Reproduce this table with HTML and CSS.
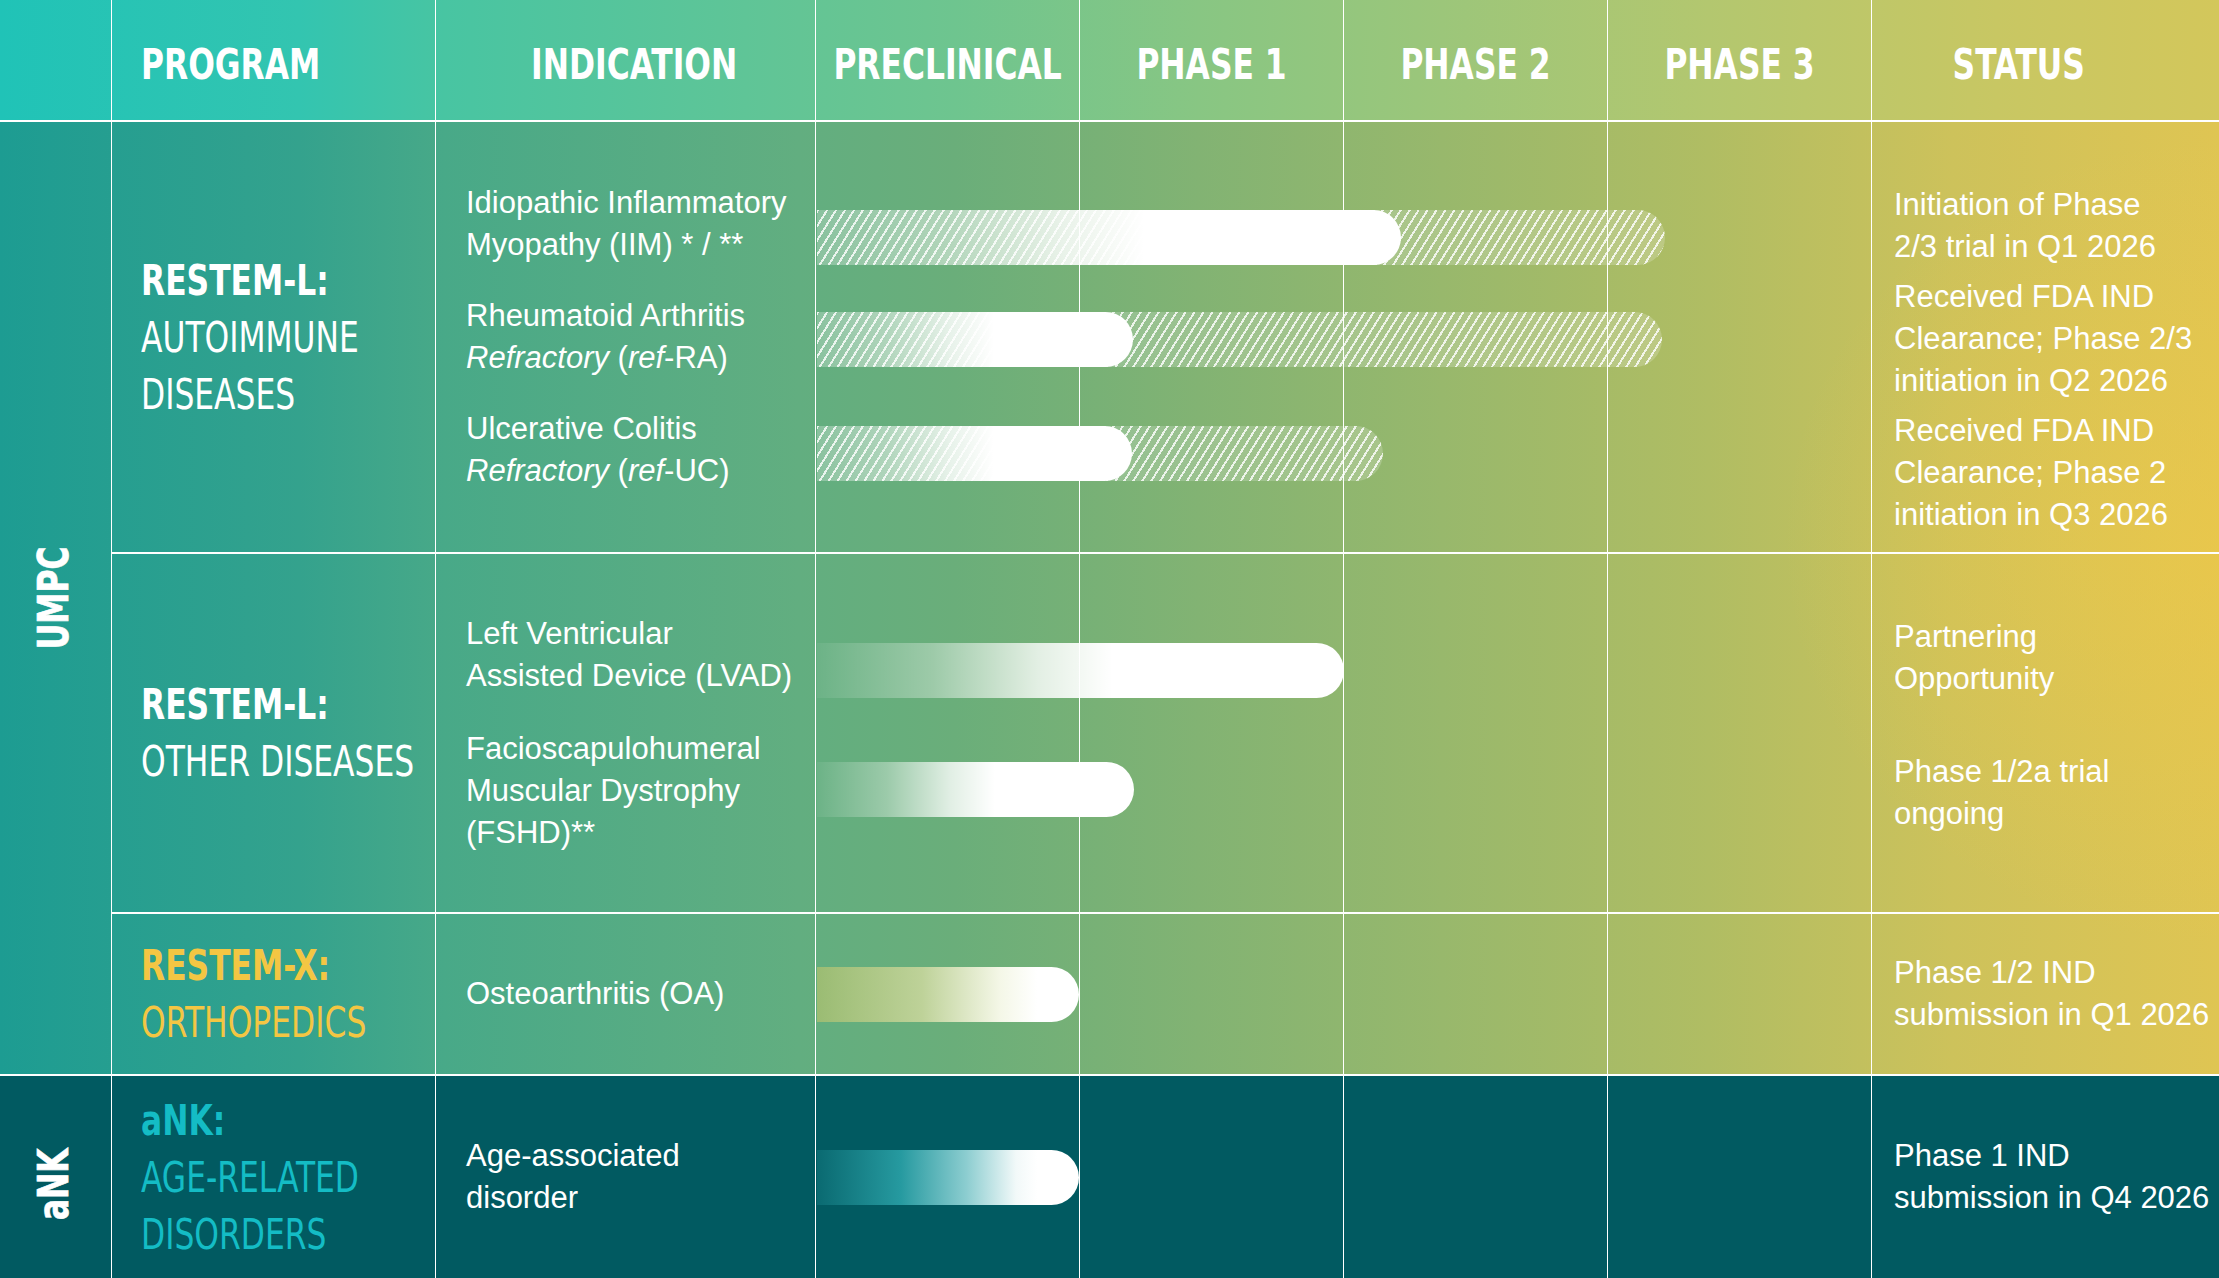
FILE: index.html
```html
<!DOCTYPE html>
<html lang="en">
<head>
<meta charset="utf-8">
<title>Pipeline</title>
<link rel="stylesheet" href="styles.css">
</head>
<body>
<div class="chart">
  <div class="head">
    <div class="hcell"></div>
    <div class="hcell h-prog"><span class="cond left">PROGRAM</span></div>
    <div class="hcell h-ind"><span class="cond">INDICATION</span></div>
    <div class="hcell h-ph"><span class="cond">PRECLINICAL</span></div>
    <div class="hcell h-ph"><span class="cond">PHASE 1</span></div>
    <div class="hcell h-ph"><span class="cond">PHASE 2</span></div>
    <div class="hcell h-ph"><span class="cond">PHASE 3</span></div>
    <div class="hcell h-status"><span class="cond">STATUS</span></div>
  </div>

  <div class="umpc">
    <div class="side"><span class="vlabel">UMPC</span></div>
    <div class="rows">
      <div class="row r1">
        <div class="prog">
          <span class="pb">RESTEM-L:</span>
          <span class="pr">AUTOIMMUNE</span>
          <span class="pr">DISEASES</span>
        </div>
        <div class="ind">
          <p>Idiopathic Inflammatory<br>Myopathy (IIM) * / **</p>
          <p>Rheumatoid Arthritis<br><em>Refractory</em> (<em>ref</em>-RA)</p>
          <p>Ulcerative Colitis<br><em>Refractory</em> (<em>ref</em>-UC)</p>
        </div>
        <div class="phases top-a">
          <div class="bar hatch" style="width:848px"><div class="bar fade" style="width:584px"></div></div>
          <div class="bar hatch gap-a" style="width:845px"><div class="bar fade" style="width:316px"></div></div>
          <div class="bar hatch gap-b" style="width:566px"><div class="bar fade" style="width:315px"></div></div>
        </div>
        <div class="status top">
          <p>Initiation of Phase<br>2/3 trial in Q1 2026</p>
          <p class="sgap">Received FDA IND<br>Clearance; Phase 2/3<br>initiation in Q2 2026</p>
          <p class="sgap">Received FDA IND<br>Clearance; Phase 2<br>initiation in Q3 2026</p>
        </div>
      </div>

      <div class="row r2">
        <div class="prog">
          <span class="pb">RESTEM-L:</span>
          <span class="pr">OTHER DISEASES</span>
        </div>
        <div class="ind gap-wide">
          <p>Left Ventricular<br>Assisted Device (LVAD)</p>
          <p>Facioscapulohumeral<br>Muscular Dystrophy<br>(FSHD)**</p>
        </div>
        <div class="phases top-b">
          <div class="bar fade" style="width:527px"></div>
          <div class="bar fade gap-c" style="width:317px"></div>
        </div>
        <div class="status top">
          <p>Partnering<br>Opportunity</p>
          <p class="sgap-wide">Phase 1/2a trial<br>ongoing</p>
        </div>
      </div>

      <div class="row r3">
        <div class="prog yellow">
          <span class="pb">RESTEM-X:</span>
          <span class="pr">ORTHOPEDICS</span>
        </div>
        <div class="ind">
          <p>Osteoarthritis (OA)</p>
        </div>
        <div class="phases mid">
          <div class="bar oa" style="width:262px"></div>
        </div>
        <div class="status mid">
          <p>Phase 1/2 IND<br>submission in Q1 2026</p>
        </div>
      </div>
    </div>
  </div>

  <div class="ank">
    <div class="side"><span class="vlabel ank-label">aNK</span></div>
    <div class="prog cyan">
      <span class="pb">aNK:</span>
      <span class="pr">AGE-RELATED</span>
      <span class="pr">DISORDERS</span>
    </div>
    <div class="ind">
      <p>Age-associated<br>disorder</p>
    </div>
    <div class="phases mid">
      <div class="bar ankbar" style="width:262px"></div>
    </div>
    <div class="status mid">
      <p>Phase 1 IND<br>submission in Q4 2026</p>
    </div>
  </div>
</div>
</body>
</html>
```

FILE: styles.css
```css
html, body {
  margin: 0;
  padding: 0;
}

body {
  background: #005a61;
}

.chart {
  width: 2219px;
  height: 1278px;
  display: flex;
  flex-direction: column;
  overflow: hidden;
  color: #fff;
  font-family: "Liberation Sans", Arial, sans-serif;
}

.chart p {
  margin: 0;
}

/* ---------- header ---------- */
.head {
  flex: none;
  height: 122px;
  box-sizing: border-box;
  border-bottom: 2px solid #fff;
  display: grid;
  grid-template-columns: 112px 324px 380px repeat(4, 264px) 1fr;
  background: linear-gradient(90deg,
    #20c3b7 0%,
    #33c5b0 13.5%,
    #48c5a2 20%,
    #63c595 36%,
    #6ec58f 43%,
    #88c683 54%,
    #9cc67a 65%,
    #b3c76f 77%,
    #c8c763 90%,
    #d3c75b 100%);
}

.hcell {
  box-sizing: border-box;
  border-right: 1px solid #fff;
  display: flex;
  align-items: center;
  padding-top: 8px;
  font-family: "DejaVu Sans Condensed", "DejaVu Sans", sans-serif;
  font-weight: 700;
  font-size: 42px;
  white-space: nowrap;
  min-width: 0;
}

.hcell:last-child {
  border-right: none;
}

.cond {
  display: inline-block;
  flex: none;
  transform: scaleX(0.83);
  transform-origin: center center;
}

.cond.left {
  transform-origin: left center;
}

.h-prog {
  padding-left: 29px;
}

.h-ind {
  justify-content: center;
  padding-left: 18px;
}

.h-ph {
  justify-content: center;
}

.h-status {
  justify-content: center;
  padding-right: 54px;
}

/* ---------- UMPC block ---------- */
.umpc {
  flex: none;
  height: 954px;
  box-sizing: border-box;
  border-bottom: 2px solid #fff;
  display: grid;
  grid-template-columns: 112px 1fr;
  background:
    radial-gradient(ellipse 560px 520px at 100% 44%, rgba(240, 200, 70, 0.55), rgba(240, 200, 70, 0) 78%),
    linear-gradient(90deg,
      #1d9c92 0%,
      #34a28d 13.5%,
      #48a988 20%,
      #62ae80 36%,
      #6aae7a 43%,
      #82b373 54%,
      #98b86c 65%,
      #b0bd63 77%,
      #cdc25b 88%,
      #dfc553 100%);
}

.side {
  box-sizing: border-box;
  border-right: 1px solid #fff;
  display: flex;
  align-items: center;
  justify-content: center;
}

.vlabel {
  writing-mode: vertical-rl;
  transform: rotate(180deg) scale(1, 0.83);
  font-family: "DejaVu Sans Condensed", "DejaVu Sans", sans-serif;
  font-weight: 700;
  font-size: 42px;
  line-height: 42px;
  white-space: nowrap;
  -webkit-text-stroke: 0.7px #fff;
  margin-right: 3px;
}

.ank-label {
  margin-top: 14px;
}

.rows {
  display: flex;
  flex-direction: column;
}

.row {
  display: grid;
  grid-template-columns: 324px 380px 1056px 1fr;
  box-sizing: border-box;
}

.r1 {
  flex: none;
  height: 432px;
  border-bottom: 2px solid #fff;
}

.r2 {
  flex: none;
  height: 360px;
  border-bottom: 2px solid #fff;
}

.r3 {
  flex: 1;
}

/* ---------- aNK block ---------- */
.ank {
  flex: 1;
  display: grid;
  grid-template-columns: 112px 324px 380px 1056px 1fr;
  background: #015a61;
}

/* ---------- cells ---------- */
.prog {
  box-sizing: border-box;
  border-right: 1px solid #fff;
  padding-left: 29px;
  display: flex;
  flex-direction: column;
  align-items: flex-start;
  justify-content: center;
  font-family: "DejaVu Sans Condensed", "DejaVu Sans", sans-serif;
  font-size: 42px;
  line-height: 57px;
  white-space: nowrap;
  min-width: 0;
}

.prog span {
  display: block;
  transform: scaleX(0.83);
  transform-origin: left center;
}

.pb {
  font-weight: 700;
}

.pr {
  font-weight: 400;
}

.yellow {
  color: #f3c643;
}

.cyan {
  color: #14bcc5;
}

.ind {
  box-sizing: border-box;
  border-right: 1px solid #fff;
  padding-left: 30px;
  display: flex;
  flex-direction: column;
  justify-content: center;
  gap: 29px;
  font-size: 31px;
  line-height: 42px;
  white-space: nowrap;
}

.ind.gap-wide {
  gap: 31px;
}

.status {
  box-sizing: border-box;
  padding-left: 22px;
  display: flex;
  flex-direction: column;
  font-size: 31px;
  line-height: 42px;
  white-space: nowrap;
}

.status.top {
  padding-top: 62px;
}

.status.mid {
  justify-content: center;
}

.chart .sgap {
  margin-top: 8px;
}

.chart .sgap-wide {
  margin-top: 51px;
}

/* ---------- phase area & bars ---------- */
.phases {
  display: flex;
  flex-direction: column;
  align-items: flex-start;
  padding-left: 1px;
  background-image: linear-gradient(90deg, transparent 263px, #fff 263px, #fff 264px);
  background-size: 264px 100%;
  background-repeat: repeat-x;
}

.phases.top-a {
  padding-top: 88px;
}

.phases.top-b {
  padding-top: 89px;
}

.phases.mid {
  justify-content: center;
}

.bar {
  flex: none;
  height: 55px;
  border-radius: 0 27.5px 27.5px 0;
}

.gap-a {
  margin-top: 47px;
}

.gap-b {
  margin-top: 59px;
}

.gap-c {
  margin-top: 64px;
}

.hatch {
  background: repeating-linear-gradient(122deg,
    rgba(255, 255, 255, 0.85) 0px,
    rgba(255, 255, 255, 0.85) 2px,
    rgba(255, 255, 255, 0.2) 2px,
    rgba(255, 255, 255, 0.2) 7.6px);
}

.fade {
  background: linear-gradient(90deg,
    rgba(255, 255, 255, 0.06) 0%,
    rgba(255, 255, 255, 0.35) 22%,
    rgba(255, 255, 255, 0.8) 42%,
    #fff 56%);
}

.oa {
  background: linear-gradient(90deg,
    rgba(222, 205, 100, 0.45) 0%,
    rgba(226, 225, 165, 0.7) 40%,
    rgba(250, 250, 236, 0.96) 70%,
    #fff 84%);
}

.ankbar {
  background: linear-gradient(90deg,
    #0a6a71 0%,
    #269aa0 32%,
    #8ccdd0 57%,
    #f2f9f9 76%,
    #fff 84%);
}
```
